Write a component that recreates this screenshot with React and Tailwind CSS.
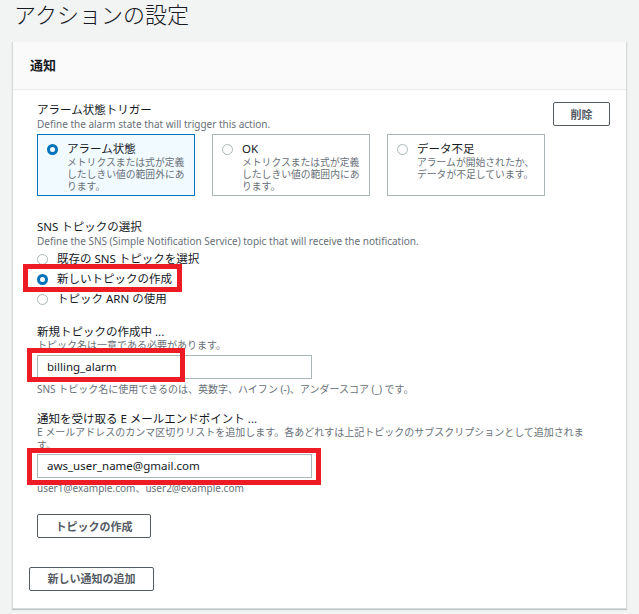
import React from "react";

const font = { fontFamily: '"Noto Sans", "Noto Sans CJK JP", sans-serif' };

function Radio({ checked }) {
  return checked ? (
    <span className="inline-block w-[11px] h-[11px] rounded-full border-[3.5px] border-[#0073bb] bg-white shrink-0" />
  ) : (
    <span className="inline-block w-[11px] h-[11px] rounded-full border border-[#aab7b8] bg-white shrink-0" />
  );
}

function Card({ checked, title, lines }) {
  return (
    <div
      className={
        "w-[158px] h-[62px] border pl-[9px] pt-[4px] " +
        (checked ? "border-[#0073bb] bg-[#f1faff]" : "border-[#aab7b8] bg-white")
      }
    >
      <div className="flex items-center gap-[9px] h-[14px] mt-[3px]">
        <Radio checked={checked} />
        <span className="text-[11.5px] leading-[14px] text-[#16191f]">{title}</span>
      </div>
      <div className="pl-[20px] mt-[1px] text-[9.8px] leading-[12px] text-[#687078]">
        {lines.map((l, i) => (
          <div key={i}>{l}</div>
        ))}
      </div>
    </div>
  );
}

function Option({ checked, label, children }) {
  return (
    <div className="relative flex items-center gap-[9px] h-[20px]">
      <Radio checked={checked} />
      <span className="text-[11.5px] leading-[20px] text-[#16191f]">{label}</span>
      {children}
    </div>
  );
}

function Button({ children, className = "" }) {
  return (
    <button
      className={
        "h-[24px] border border-[#545b64] rounded-[2px] bg-white text-[11px] font-bold text-[#545b64] leading-none " +
        className
      }
    >
      {children}
    </button>
  );
}

function RedBox({ className }) {
  return <div className={"absolute border-[5px] border-[#ed1c24] pointer-events-none " + className} />;
}

export default function App() {
  return (
    <div style={font} className="w-[639px] min-h-[614px] bg-[#f2f3f3] overflow-hidden">
      <h1 className="pl-[14px] h-[28px] text-[22px] leading-[28px] font-light text-[#16191f]">
        アクションの設定
      </h1>
      <div className="mt-[14px] ml-[12px] w-[615px] bg-white border-l border-r border-b border-[#d5dbdb] shadow-[0_1px_1px_0_rgba(0,28,36,0.2)]">
        <div className="h-[48px] bg-[#fafafa] border-b border-[#eaeded] flex items-center pl-[17px]">
          <span className="text-[13px] font-bold text-[#16191f]">通知</span>
        </div>
        <div className="pl-[24px] pr-[16px] pt-[12px]">
          <div className="flex justify-between">
            <div>
              <div className="text-[11.5px] leading-[15px] text-[#16191f]">アラーム状態トリガー</div>
              <div className="text-[10px] leading-[15px] text-[#687078]">
                Define the alarm state that will trigger this action.
              </div>
              <div className="flex gap-[17px] mt-[2px]">
                <Card
                  checked
                  title="アラーム状態"
                  lines={["メトリクスまたは式が定義", "したしきい値の範囲外にあ", "ります。"]}
                />
                <Card
                  title="OK"
                  lines={["メトリクスまたは式が定義", "したしきい値の範囲内にあ", "ります。"]}
                />
                <Card title="データ不足" lines={["アラームが開始されたか、", "データが不足しています。"]} />
              </div>
            </div>
            <Button className="w-[57px]">削除</Button>
          </div>

          <div className="mt-[24px] text-[11.5px] leading-[14px] text-[#16191f]">SNS トピックの選択</div>
          <div className="text-[10px] leading-[15px] text-[#687078]">
            Define the SNS (Simple Notification Service) topic that will receive the notification.
          </div>
          <Option label="既存の SNS トピックを選択" />
          <Option checked label="新しいトピックの作成">
            <RedBox className="left-[-14px] top-[-5px] w-[159px] h-[28px]" />
          </Option>
          <Option label="トピック ARN の使用" />

          <div className="mt-[16px] text-[11.5px] leading-[14px] text-[#16191f]">新規トピックの作成中 ...</div>
          <div className="text-[10px] leading-[13px] text-[#687078]">トピック名は一意である必要があります。</div>
          <div className="relative mt-[3px] w-[275px] h-[24px] border border-[#aab7b8] bg-white flex items-center pl-[9px] text-[11.5px] text-[#16191f]">
            billing_alarm
            <RedBox className="left-[-11px] top-[-8px] w-[158px] h-[34px]" />
          </div>
          <div className="mt-[4px] text-[10px] leading-[12px] text-[#687078]">
            SNS トピック名に使用できるのは、英数字、ハイフン (-)、アンダースコア (_) です。
          </div>

          <div className="mt-[17px] text-[11.5px] leading-[14px] text-[#16191f]">
            通知を受け取る E メールエンドポイント ...
          </div>
          <div className="text-[10px] leading-[13px] text-[#687078]">
            <div>E メールアドレスのカンマ区切りリストを追加します。各あどれすは上記トピックのサブスクリプションとして追加されま</div>
            <div>す。</div>
          </div>
          <div className="relative mt-[2px] w-[275px] h-[24px] border border-[#aab7b8] bg-white flex items-center pl-[9px] text-[11.5px] text-[#16191f]">
            aws_user_name@gmail.com
            <RedBox className="left-[-11px] top-[-7px] w-[294px] h-[37px]" />
          </div>
          <div className="mt-[4px] text-[10px] leading-[12px] text-[#687078]">
            user1@example.com、user2@example.com
          </div>

          <Button className="mt-[20px] w-[114px]">トピックの作成</Button>
        </div>
        <div className="pl-[16px] pt-[27px] pb-[17px]">
          <Button className="w-[125px]">新しい通知の追加</Button>
        </div>
      </div>
    </div>
  );
}
